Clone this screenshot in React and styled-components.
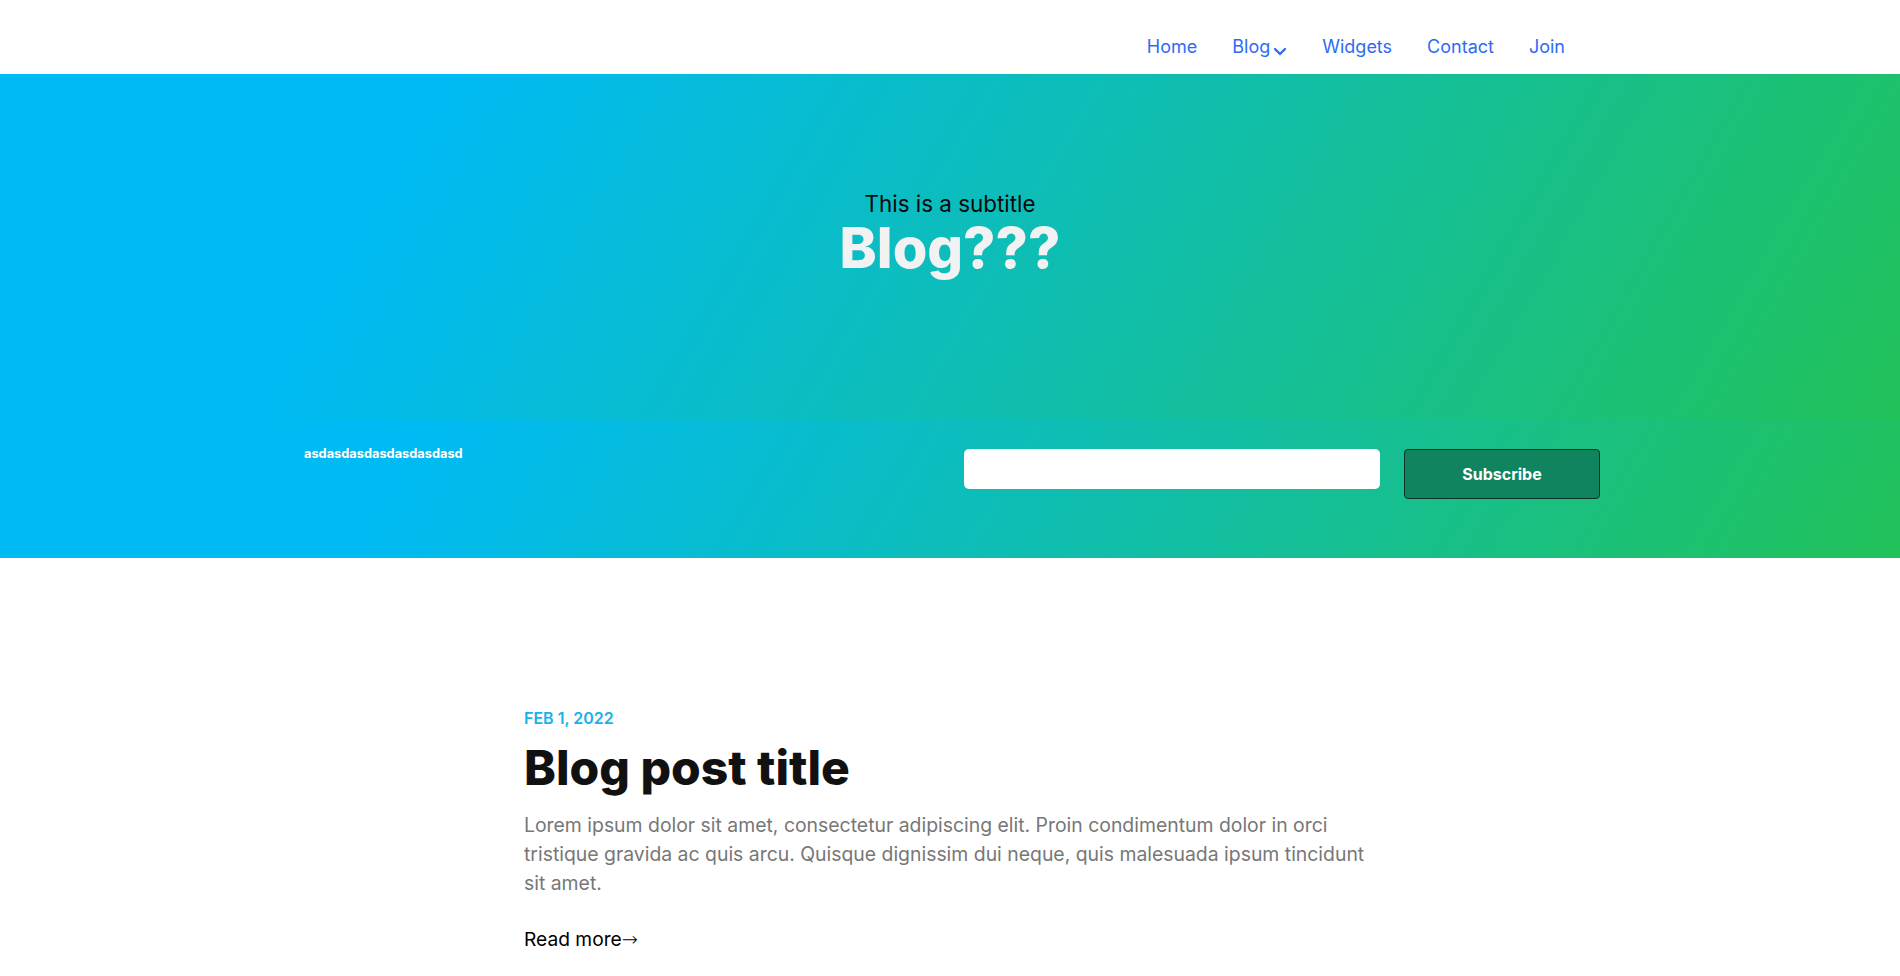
import styled, { createGlobalStyle } from "styled-components";

const GlobalStyle = createGlobalStyle`
  * {
    box-sizing: border-box;
  }

  body {
    margin: 0;
    font-family: Inter, "Noto Sans", sans-serif;
    background: #fff;
    color: #111;
  }
`;

const navLinks = ["Home", "Blog", "Widgets", "Contact", "Join"];

const App = () => {
  return (
    <>
      <GlobalStyle />
      <Header>
        <HeaderInner>
          <NavList>
            {navLinks.map((link) => (
              <NavItem key={link}>
                <NavLink href="#">
                  {link}
                  {link === "Blog" && (
                    <Chevron width="14" height="9" viewBox="0 0 14 9">
                      <polyline
                        points="2,2 7,7 12,2"
                        fill="none"
                        stroke="currentColor"
                        strokeWidth="2.4"
                        strokeLinecap="round"
                        strokeLinejoin="round"
                      />
                    </Chevron>
                  )}
                </NavLink>
              </NavItem>
            ))}
          </NavList>
        </HeaderInner>
      </Header>

      <Hero>
        <Subtitle>This is a subtitle</Subtitle>
        <HeroTitle>Blog???</HeroTitle>
      </Hero>

      <SubscribeBar>
        <Container>
          <SubscribeText>asdasdasdasdasdasdasd</SubscribeText>
          <SubscribeForm onSubmit={(e) => e.preventDefault()}>
            <EmailInput type="email" />
            <SubscribeButton type="submit">Subscribe</SubscribeButton>
          </SubscribeForm>
        </Container>
      </SubscribeBar>

      <Posts>
        <Post>
          <PostDate>FEB 1, 2022</PostDate>
          <PostTitle>Blog post title</PostTitle>
          <PostExcerpt>
            Lorem ipsum dolor sit amet, consectetur adipiscing elit. Proin
            condimentum dolor in orci tristique gravida ac quis arcu. Quisque
            dignissim dui neque, quis malesuada ipsum tincidunt sit amet.
          </PostExcerpt>
          <ReadMore href="#">
            Read more<Arrow>→</Arrow>
          </ReadMore>
        </Post>
      </Posts>
    </>
  );
};

const Header = styled.header`
  height: 74px;
  background: #fff;
`;

const HeaderInner = styled.div`
  width: 1300px;
  margin: 0 auto;
  display: flex;
  justify-content: flex-end;
  padding-top: 36px;
`;

const NavList = styled.ul`
  display: flex;
  list-style: none;
  margin: 0;
  padding: 0 35px 0 0;
  gap: 35px;
`;

const NavItem = styled.li`
  display: flex;
`;

const NavLink = styled.a`
  font-size: 18px;
  color: #2f6af5;
  text-decoration: none;
  display: flex;
  align-items: flex-start;
  line-height: normal;
`;

const Chevron = styled.svg`
  margin-left: 3px;
  margin-top: 11px;
`;

const gradient = "linear-gradient(120deg, #00baf3 22%, #22c25a 100%)";

const Hero = styled.section`
  height: 345px;
  padding-top: 116px;
  background: ${gradient};
  text-align: center;
`;

const Subtitle = styled.p`
  margin: 0;
  font-size: 22.4px;
  color: #0a0a0a;
  line-height: normal;
`;

const HeroTitle = styled.h1`
  margin: -3px 0 0;
  font-size: 56px;
  font-weight: 800;
  color: #f2f2f2;
  line-height: normal;
`;

const SubscribeBar = styled.section`
  height: 139px;
  padding-top: 30px;
  background: ${gradient};
`;

const Container = styled.div`
  width: 1300px;
  margin: 0 auto;
  display: flex;
  justify-content: space-between;
  align-items: flex-start;
`;

const SubscribeText = styled.p`
  margin: -2px 0 0;
  padding-left: 4px;
  font-size: 12.8px;
  font-weight: 700;
  color: #fff;
  line-height: 13px;
`;

const SubscribeForm = styled.form`
  display: flex;
  align-items: flex-start;
  gap: 24px;
`;

const EmailInput = styled.input`
  width: 416px;
  height: 40px;
  border: none;
  border-radius: 5px;
  background: #fff;
  padding: 0 12px;
  font-size: 16px;
  font-family: inherit;
`;

const SubscribeButton = styled.button`
  width: 196px;
  height: 50px;
  background: #10845f;
  border: 1px solid #0b3325;
  border-radius: 4px;
  color: #fff;
  font-family: inherit;
  font-size: 16px;
  font-weight: 700;
  cursor: pointer;
`;

const Posts = styled.main`
  padding-top: 150px;
`;

const Post = styled.article`
  width: 852px;
  margin: 0 auto;
`;

const PostDate = styled.p`
  margin: 0 0 10px;
  font-size: 16px;
  font-weight: 600;
  color: #17b1ec;
  line-height: normal;
`;

const PostTitle = styled.h2`
  margin: 0 0 14px;
  font-size: 48px;
  font-weight: 800;
  color: #111;
  line-height: normal;
`;

const PostExcerpt = styled.p`
  margin: 0 0 30px;
  font-size: 19.4px;
  line-height: 28.8px;
  color: #777;
`;

const ReadMore = styled.a`
  font-size: 19.2px;
  color: #000;
  text-decoration: none;
  line-height: normal;
`;

const Arrow = styled.span`
  font-family: "DejaVu Sans", sans-serif;
  font-weight: 200;
`;

export default App;
